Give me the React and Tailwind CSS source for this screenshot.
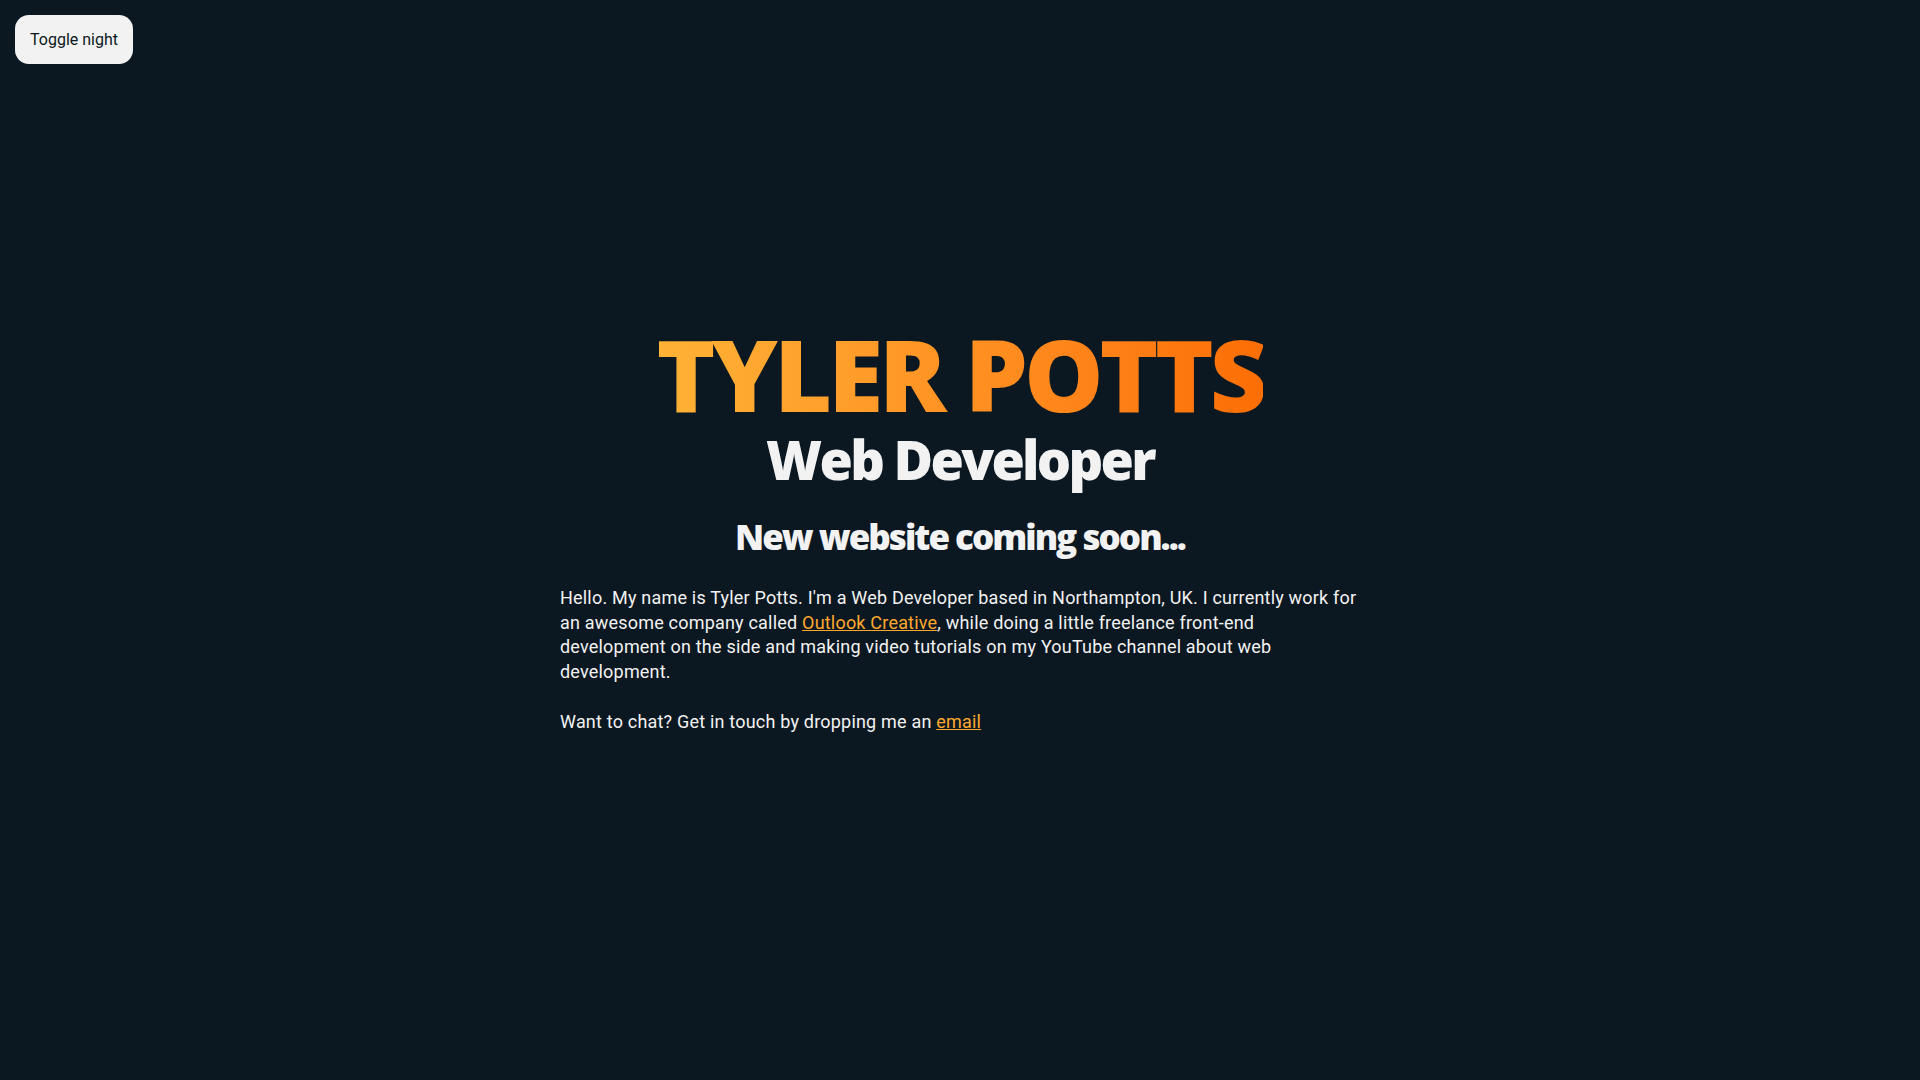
import React from "react";

const headFont = { fontFamily: "'Open Sans', Roboto, sans-serif" };

export default function App() {
  return (
    <div
      className="relative min-h-screen w-full bg-[#0c1821] flex items-center justify-center"
      style={{ fontFamily: "Roboto, 'Noto Sans', sans-serif" }}
    >
      <button className="absolute top-[15px] left-[15px] h-[49px] w-[118px] rounded-[14px] bg-[#f2f2f2] text-[#0c1821] text-[16px] leading-none flex items-center justify-center">
        Toggle night
      </button>

      <div className="w-[800px] mb-[22px]">
        <h1
          className="text-center text-[100px] leading-none font-extrabold tracking-[-4px] bg-gradient-to-r from-[#ffb236] to-[#fc6e04] bg-clip-text text-transparent w-fit mx-auto"
          style={headFont}
        >
          TYLER POTTS
        </h1>
        <h2
          className="mt-[9px] text-center text-[54px] leading-none font-extrabold text-[#f2f2f2] tracking-[-2.7px]"
          style={headFont}
        >
          Web Developer
        </h2>
        <h3
          className="mt-[33px] text-center text-[35px] leading-none font-extrabold text-[#f2f2f2] tracking-[-2px]"
          style={headFont}
        >
          New website coming soon...
        </h3>
        <p className="mt-[32px] text-[18px] leading-[24.5px] tracking-[0.2px] text-[#f2f2f2]">
          Hello. My name is Tyler Potts. I'm a Web Developer based in Northampton, UK. I currently work for an awesome company called{" "}
          <a href="#" className="text-[#ffa82e] underline">Outlook Creative</a>, while doing a little freelance front-end development on the side and making video tutorials on my YouTube channel about web development.
        </p>
        <p className="mt-[26px] text-[18px] leading-[24.5px] tracking-[0.2px] text-[#f2f2f2]">
          Want to chat? Get in touch by dropping me an{" "}
          <a href="#" className="text-[#ffa82e] underline">email</a>
        </p>
      </div>
    </div>
  );
}
